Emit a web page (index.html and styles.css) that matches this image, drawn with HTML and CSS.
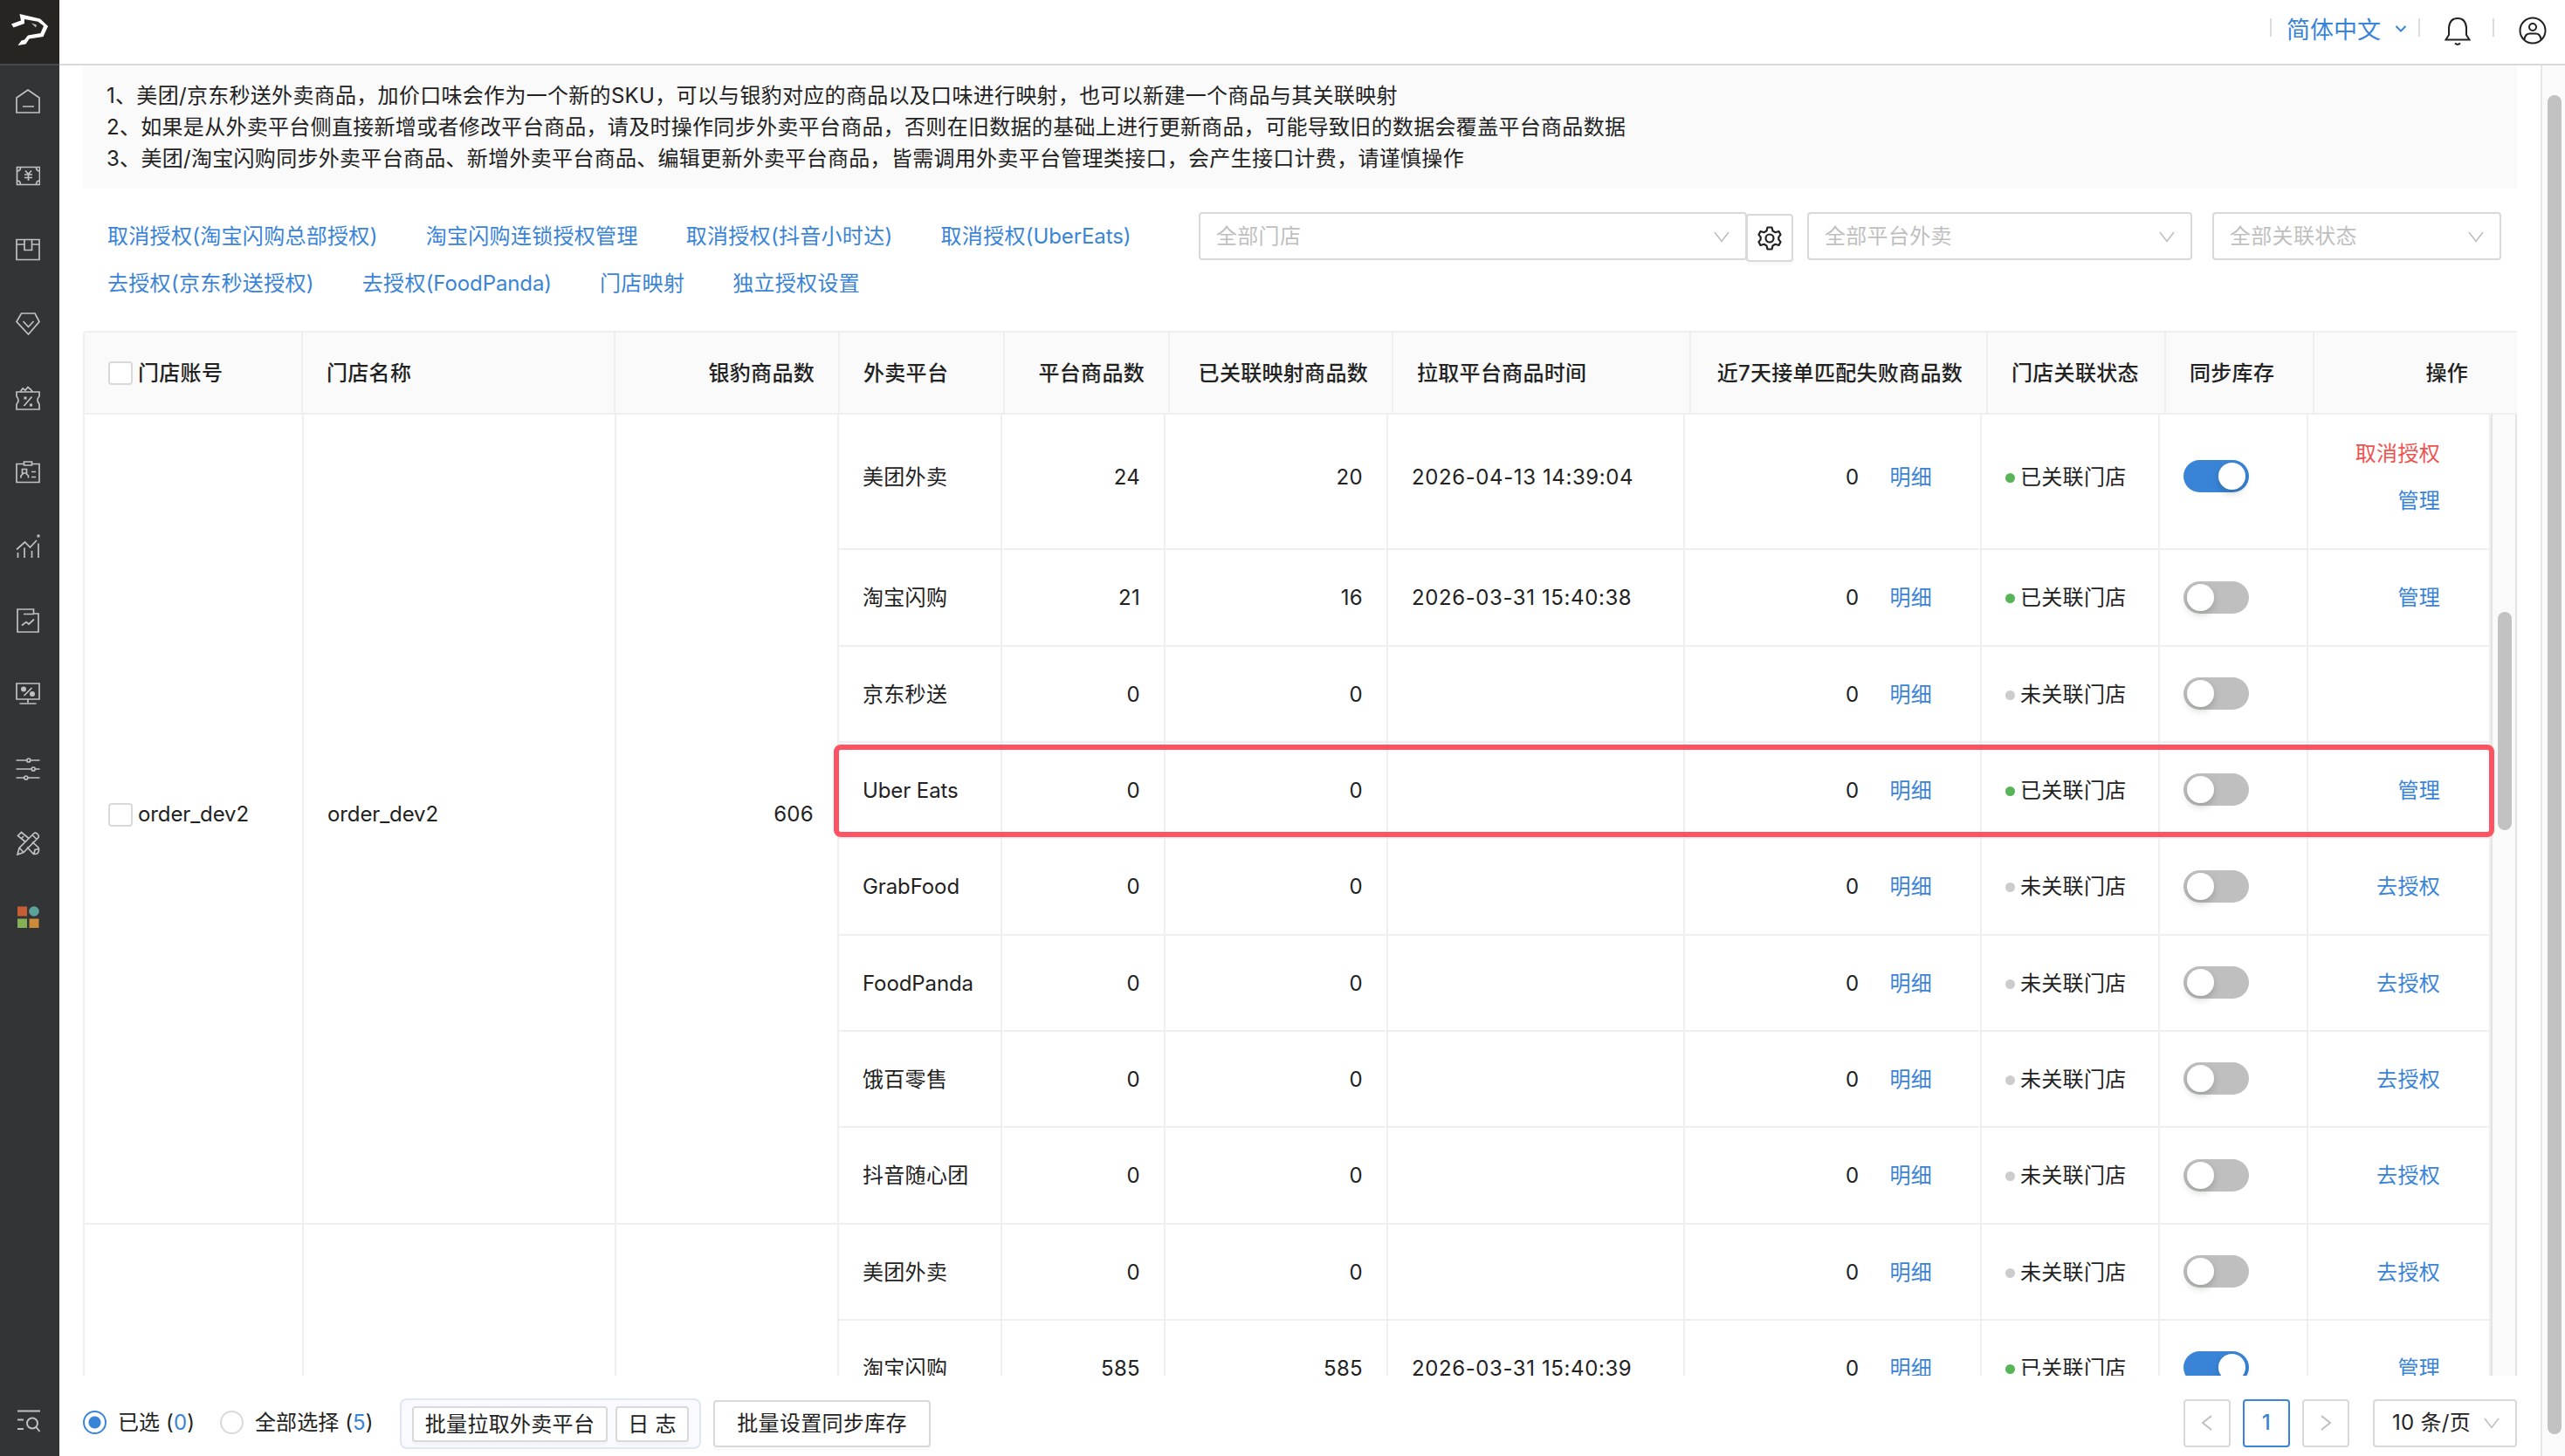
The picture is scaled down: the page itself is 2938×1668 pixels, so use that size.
FILE: index.html
```html
<!DOCTYPE html>
<html lang="zh-CN">
<head>
<meta charset="utf-8">
<title>外卖平台商品</title>
<link rel="stylesheet" href="styles.css">
</head>
<body>
<div class="app">
  <aside class="sidebar">
    <div class="logo"><svg width="44" height="36" viewBox="0 0 44 36"><path d="M1 11.500 12 7.500 10.500 0 34 5.500 43 14 37.500 26 21.500 28.500 17.500 34.500 8.500 36 12.500 30.500 16 29.500 20 24.500 34.500 22 38 13.800 31.500 8.800 16 6 16 11 3.500 15.500Z"/><path d="M24 10.500 30 12.500 29 15.500Z" opacity=".7"/></svg></div>
    <nav class="menu">
      <a><svg viewBox="0 0 28 28"><path d="M1 27V10L14 1l13 9v17ZM8 20h13"/></svg></a>
      <a><svg viewBox="0 0 28 28"><path d="M1.500 4.500h26v20h-26ZM1.500 9q4 0 4-4.500M27.500 9q-4 0-4-4.500M1.500 20q4 0 4 4.500M27.500 20q-4 0-4 4.500M11 8.500l3.500 4 3.500-4M14.500 12.500V20M10 13h9M10 16.500h9"/></svg></a>
      <a><svg viewBox="0 0 28 28"><path d="M1 2.500h26v23H1ZM1 8h9M18 8h9M10 2.500V14.500h8.500V2.500"/></svg></a>
      <a><svg viewBox="0 0 28 28"><path d="M6.500 2h15.500l5 9.500L14.500 26 1 11.500ZM8.500 11l6 6.500 6-6.500"/></svg></a>
      <a><svg viewBox="0 0 28 28"><path d="M1 7h26v5q-4 4 0 9v6H1v-6q4-4 0-9ZM9.500 23l9-10.500M5.500 6.500 8 3l3 2 3-3.500L17 4l2.500 3"/><path class="solid" d="M9.500 12.500h3v3h-3ZM16 20.500h3v3h-3Z"/></svg></a>
      <a><svg viewBox="0 0 28 28"><path d="M9 4.500H1v21h26v-21h-8M9.500 2h9v4h-9ZM6 20.500v-2.500l3-3M14.500 20.500v-2.500l-3-3M18 13.500h5M18 19.500h5M7.500 10.500h5v4.500h-5Z"/></svg></a>
      <a><svg viewBox="0 0 28 28"><path d="M1 17.500 10.500 9l6 6L24 7M2.500 27v-6M10 27V15.500M18.500 27v-8M26 27V10.500"/><path class="solid" d="M24.500.5h3v3h-3Z"/></svg></a>
      <a><svg viewBox="0 0 28 28"><path d="M2 1h18.500v5H26v21H2ZM9 6.500h12M7 19.500l5-4 3 2.500 6-5.500"/></svg></a>
      <a><svg viewBox="0 0 28 28"><path d="M1 1h26v18H1ZM14 19v4M4.500 24h19M9.500 15l9-9"/><circle class="solid" cx="9" cy="7.500" r="3"/><circle class="solid" cx="19" cy="13" r="3"/></svg></a>
      <a><svg viewBox="0 0 28 28"><path d="M.5 4H13M16.500 4h11M.5 14H18.500M22 14h5.500M.5 24H10M13.500 24h14"/><circle cx="14.800" cy="4" r="2"/><circle cx="20.200" cy="14" r="2"/><circle cx="11.800" cy="24" r="2"/></svg></a>
      <a><svg viewBox="0 0 28 28"><path d="M2 27l2-7.500L20.500 3q2-2 4.500.5t.5 4.500L9 24.500ZM4.500 19.500l4.500 5M19 4.500l5 5M10.500 12 2.500 5.500 6.500 1.500 15 8.500M6 9l3-3M19 12.500l7 6.500q1.500 4-1 6.500-3 2-5.500 0l-6.500-7M21 26l1-4.500 4.500-1"/></svg></a>
      <a><svg class="tiles" viewBox="0 0 28 28"><path fill="#c55d35" d="M2 1.500h11v11H2Z"/><circle fill="#5ba39a" cx="21" cy="7" r="5.800"/><path fill="#86b055" d="M2 15.500h11v10.500H2Z"/><path fill="#cc8b38" d="M15.500 15.500h11v10.500h-11Z"/></svg></a>
    </nav>
    <a class="menu-search"><svg width="28" height="28" viewBox="0 0 28 28"><path d="M1 2.500h26M1 12.500h7M1 23h7"/><circle cx="18" cy="16.500" r="6"/><path d="M22.500 21l4 5"/></svg></a>
  </aside>

  <div class="main">
    <header class="topbar">
      <a class="lang">简体中文<svg width="14" height="10" viewBox="0 0 14 10"><path d="M1.500 2 7 7.500 12.500 2"/></svg></a>
      <a class="bell"><svg width="30" height="34" viewBox="0 0 30 34"><path d="M1.500 26.500h27L25 21V12.500Q24 2 15 2T5 12.500V21ZM12 30.500q3 3 6 0"/></svg></a>
      <a class="user"><svg width="32" height="32" viewBox="0 0 32 32"><circle cx="16" cy="16" r="14.500"/><circle cx="16" cy="12" r="4"/><path d="M6.500 26q1-6.500 6-6.500h7q5 0 6 6.500"/></svg></a>
    </header>
    <div class="viewport">
      <div class="content">
        <div class="notice">
          <p>1、美团/京东秒送外卖商品，加价口味会作为一个新的SKU，可以与银豹对应的商品以及口味进行映射，也可以新建一个商品与其关联映射</p>
          <p>2、如果是从外卖平台侧直接新增或者修改平台商品，请及时操作同步外卖平台商品，否则在旧数据的基础上进行更新商品，可能导致旧的数据会覆盖平台商品数据</p>
          <p>3、美团/淘宝闪购同步外卖平台商品、新增外卖平台商品、编辑更新外卖平台商品，皆需调用外卖平台管理类接口，会产生接口计费，请谨慎操作</p>
        </div>
        <div class="toolbar">
          <div class="links">
            <a>取消授权(淘宝闪购总部授权)</a><a>淘宝闪购连锁授权管理</a><a>取消授权(抖音小时达)</a><a>取消授权<span class="latin">(UberEats)</span></a>
            <a>去授权(京东秒送授权)</a><a>去授权<span class="latin">(FoodPanda)</span></a><a>门店映射</a><a>独立授权设置</a>
          </div>
          <div class="select select-store">全部门店<svg class="chev" viewBox="0 0 18 13"><path d="M1 1l8 10.500L17 1"/></svg></div>
          <button class="gear"><svg width="28" height="28" viewBox="0 0 28 28"><path d="M11.500 1.500h5l1 4 3 1.700 4-1.200 2 3.800-2.200 2.900v2.600l2.200 2.900-2 3.800-4-1.200-3 1.700-1 4h-5l-1-4-3-1.700-4 1.200-2-3.800 2.200-2.900v-2.600L1.500 9.800l2-3.800 4 1.200 3-1.700Z"/><circle cx="14" cy="14" r="4.500"/></svg></button>
          <div class="select select-platform">全部平台外卖<svg class="chev" viewBox="0 0 18 13"><path d="M1 1l8 10.500L17 1"/></svg></div>
          <div class="select select-status">全部关联状态<svg class="chev" viewBox="0 0 18 13"><path d="M1 1l8 10.500L17 1"/></svg></div>
        </div>

        <div class="table">
          <table class="thead">
            <colgroup><col style="width:250px"><col style="width:358px"><col style="width:257px"><col style="width:189px"><col style="width:189px"><col style="width:256px"><col style="width:341px"><col style="width:340px"><col style="width:204px"><col style="width:170px"><col style="width:232px"></colgroup>
            <tr><th><div class="account"><i class="check"></i>门店账号</div></th><th>门店名称</th><th class="num">银豹商品数</th><th>外卖平台</th><th class="num">平台商品数</th><th class="num">已关联映射商品数</th><th>拉取平台商品时间</th><th class="num">近7天接单匹配失败商品数</th><th>门店关联状态</th><th>同步库存</th><th class="ops">操作</th></tr>
          </table>
          <div class="scroll">
            <table class="tbody">
              <colgroup><col style="width:251px"><col style="width:358px"><col style="width:255px"><col style="width:187px"><col style="width:187px"><col style="width:255px"><col style="width:340px"><col style="width:340px"><col style="width:204px"><col style="width:170px"><col style="width:209px"></colgroup>
              <tr class="tall"><td rowspan="8" class="latin"><div class="account"><i class="check"></i>order_dev2</div></td><td rowspan="8" class="latin">order_dev2</td><td rowspan="8" class="num">606</td><td>美团外卖</td><td class="num">24</td><td class="num">20</td><td class="date">2026-04-13 14:39:04</td><td class="fail">0<a>明细</a></td><td><span class="state on">已关联门店</span></td><td><i class="switch on"></i></td><td class="ops"><a class="danger">取消授权</a><a>管理</a></td></tr>
              <tr class="r111"><td>淘宝闪购</td><td class="num">21</td><td class="num">16</td><td class="date">2026-03-31 15:40:38</td><td class="fail">0<a>明细</a></td><td><span class="state on">已关联门店</span></td><td><i class="switch"></i></td><td class="ops"><a>管理</a></td></tr>
              <tr><td>京东秒送</td><td class="num">0</td><td class="num">0</td><td></td><td class="fail">0<a>明细</a></td><td><span class="state">未关联门店</span></td><td><i class="switch"></i></td><td></td></tr>
              <tr><td class="latin">Uber Eats</td><td class="num">0</td><td class="num">0</td><td></td><td class="fail">0<a>明细</a></td><td><span class="state on">已关联门店</span></td><td><i class="switch"></i></td><td class="ops"><a>管理</a></td></tr>
              <tr class="r111"><td class="latin">GrabFood</td><td class="num">0</td><td class="num">0</td><td></td><td class="fail">0<a>明细</a></td><td><span class="state">未关联门店</span></td><td><i class="switch"></i></td><td class="ops"><a>去授权</a></td></tr>
              <tr><td class="latin">FoodPanda</td><td class="num">0</td><td class="num">0</td><td></td><td class="fail">0<a>明细</a></td><td><span class="state">未关联门店</span></td><td><i class="switch"></i></td><td class="ops"><a>去授权</a></td></tr>
              <tr><td>饿百零售</td><td class="num">0</td><td class="num">0</td><td></td><td class="fail">0<a>明细</a></td><td><span class="state">未关联门店</span></td><td><i class="switch"></i></td><td class="ops"><a>去授权</a></td></tr>
              <tr class="r111"><td>抖音随心团</td><td class="num">0</td><td class="num">0</td><td></td><td class="fail">0<a>明细</a></td><td><span class="state">未关联门店</span></td><td><i class="switch"></i></td><td class="ops"><a>去授权</a></td></tr>
              <tr><td rowspan="2"></td><td rowspan="2"></td><td rowspan="2"></td><td>美团外卖</td><td class="num">0</td><td class="num">0</td><td></td><td class="fail">0<a>明细</a></td><td><span class="state">未关联门店</span></td><td><i class="switch"></i></td><td class="ops"><a>去授权</a></td></tr>
              <tr><td>淘宝闪购</td><td class="num">585</td><td class="num">585</td><td class="date">2026-03-31 15:40:39</td><td class="fail">0<a>明细</a></td><td><span class="state on">已关联门店</span></td><td><i class="switch on"></i></td><td class="ops"><a>管理</a></td></tr>
            </table>
            <div class="track"><div class="thumb"></div></div>
          </div>
          <div class="highlight"></div>
        </div>

        <footer class="footer">
          <span class="radio checked"></span><span class="radio-label first">已选 (<b>0</b>)</span>
          <span class="radio"></span><span class="radio-label second">全部选择 (<b>5</b>)</span>
          <div class="group"><button class="btn pull">批量拉取外卖平台</button><button class="btn log">日 志</button></div>
          <button class="btn stock">批量设置同步库存</button>
          <div class="pager">
            <span class="page"><svg width="12" height="18" viewBox="0 0 12 18"><path d="M11 1 1 9l10 8"/></svg></span>
            <span class="page active">1</span>
            <span class="page"><svg width="12" height="18" viewBox="0 0 12 18"><path d="M1 1l10 8L1 17"/></svg></span>
            <span class="page-size">10 条/页<svg class="chev" viewBox="0 0 18 13"><path d="M1 1l8 10.500L17 1"/></svg></span>
          </div>
        </footer>
      </div>
      <div class="page-track"><div class="thumb"></div></div>
    </div>
  </div>
</div>
</body>
</html>
```
FILE: styles.css
```css
* { box-sizing: border-box; }
body {
  margin: 0;
  background: #fff;
  color: #222;
  font: 24px/36px Inter, "Noto Sans CJK SC", sans-serif;
  letter-spacing: .3px;
}
a { color: #3a84d8; text-decoration: none; }
p { margin: 0; }
svg { display: block; fill: none; stroke: currentColor; stroke-width: 2; flex: none; }
button { font: inherit; letter-spacing: inherit; color: inherit; padding: 0; }
.latin { letter-spacing: -.1px; }

.app { display: flex; height: 1668px; overflow: hidden; }

/* Sidebar */
.sidebar { width: 68px; background: #333436; display: flex; flex-direction: column; }
.logo { height: 75px; background: #262522; border-bottom: 2px solid #46484a; padding: 16px 0 0 12px; }
.logo svg { fill: #fff; stroke: none; }
.menu a { height: 85px; padding: 0 4px 3px 0; display: flex; align-items: center; justify-content: center; color: #bfc1c2; }
.menu svg { width: 28px; height: 28px; stroke-width: 1.7; }
.menu .solid { fill: currentColor; stroke: none; }
.menu .tiles { stroke: none; }
.menu-search { margin: auto 0 26px 19px; color: #bfc1c2; }

/* Top bar */
.main { flex: 1; min-width: 0; display: flex; flex-direction: column; }
.topbar { height: 75px; border-bottom: 2px solid #d9d9d9; display: flex; justify-content: flex-end; padding: 20px 21px 0 0; }
.topbar a { position: relative; }
.topbar a::before { content: ""; position: absolute; left: 0; top: 1px; width: 2px; height: 21px; background: #dcdcdc; }
.lang { width: 170px; display: flex; align-items: center; gap: 16px; padding: 2px 0 0 19px; height: 28px; font-size: 27px; letter-spacing: 0; }
.lang svg { margin-top: -4px; }
.bell { width: 85px; padding-left: 30px; }
.bell svg { margin-top: -1px; }
.user { width: 62px; padding-left: 30px; }
.user svg { margin-top: -1px; }
.topbar .bell, .topbar .user { color: #222; }

/* Content */
.viewport { flex: 1; min-height: 0; display: flex; }
.content { flex: 1; padding: 0 27px; display: flex; flex-direction: column; }
.notice { height: 141px; background: #fafafa; padding: 17px 0 0 27px; white-space: nowrap; }
.toolbar { height: 163px; padding: 27px 18px 0 28px; display: flex; align-items: flex-start; }
.links { width: 1250px; display: flex; flex-wrap: wrap; column-gap: 55px; line-height: 54px; padding-top: 1px; }
.select { height: 55px; border: 2px solid #d9d9d9; border-radius: 4px; padding: 1px 18px 0 18px; display: flex; align-items: center; justify-content: space-between; color: #bfbfbf; }
.chev { width: 18px; height: 13px; stroke-width: 1.6; color: #bfbfbf; }
.select-store { width: 628px; }
.gear { width: 54px; height: 55px; margin: 2px 16px 0 -1px; background: #fff; border: 2px solid #d9d9d9; border-radius: 4px; display: flex; align-items: center; justify-content: center; box-shadow: 0 4px 0 rgba(0, 0, 0, .02); }
.gear svg { stroke-width: 2.2; stroke-linejoin: round; }
.select-platform { width: 441px; margin-right: 23px; }
.select-status { width: 331px; }

/* Table */
.table { position: relative; height: 1197px; border: 2px solid #efefef; border-width: 2px 0 0 2px; border-radius: 4px 0 0 0; }
table { table-layout: fixed; border-collapse: separate; border-spacing: 0; }
th, td { padding: 1px 27px 0; border: 0 solid #efefef; border-width: 0 2px 2px 0; text-align: left; white-space: nowrap; }
.thead { width: 2786px; background: #fafafa; }
th { height: 94px; font-weight: 500; }
th:last-child { border-right: 0; }
.scroll { height: 1101px; overflow: hidden; display: flex; }
.tbody { width: 2756px; margin-top: -11px; flex: none; align-self: flex-start; }
td { height: 110px; }
.r111 td { height: 111px; }
.tall td { height: 166px; }
.num { text-align: right; }
.date { letter-spacing: .6px; }
.account { display: flex; align-items: center; gap: 6px; }
.check { width: 28px; height: 27px; border: 2px solid #d9d9d9; border-radius: 4px; background: #fff; }
.fail { text-align: right; padding-right: 55px; }
.fail a { margin-left: 35px; }
.ops { text-align: right; padding-right: 56px; }
.ops a { display: block; line-height: 54px; }
.ops .danger { color: #ee5350; }
.state { display: flex; align-items: center; gap: 6px; }
.state::before { content: ""; width: 11px; height: 11px; border-radius: 50%; background: #ccc; margin-top: 1px; }
.state.on::before { background: #57b557; }
.switch { display: block; width: 75px; height: 37px; margin-top: -2px; border-radius: 19px; background: #bfbfbf; padding: 3px 4px; }
.switch::before { content: ""; display: block; width: 31px; height: 31px; border-radius: 50%; background: #fff; box-shadow: 0 4px 8px rgba(0, 35, 11, .2); }
.switch.on { background: #3a84d8; }
.switch.on::before { margin-left: auto; }
.track { flex: 1; background: #fafafa; border: 2px solid #e4e4e4; border-width: 0 2px; padding: 226px 0 0 6px; }
.thumb { width: 16px; border-radius: 8px; background: #c2c2c2; }
.track .thumb { height: 250px; }
.highlight { position: absolute; left: 858px; top: 472px; width: 1902px; height: 106px; border: 6px solid #ff5262; border-radius: 8px; }
.page-track { width: 28px; background: #fafafa; border-left: 2px solid #e6e6e6; padding: 34px 0 0 6px; }
.page-track .thumb { height: 1534px; }

/* Footer */
.footer { height: 92px; display: flex; align-items: center; padding-top: 18px; }
.radio { width: 27px; height: 27px; border: 2px solid #d9d9d9; border-radius: 50%; margin-top: -4px; }
.radio.checked { border-color: #3a84d8; background: radial-gradient(circle, #3a84d8 6.5px, transparent 7.5px); }
.radio-label { padding-left: 13px; margin-top: -3px; white-space: nowrap; letter-spacing: .1px; }
.radio-label b { font-weight: 400; color: #3a84d8; }
.first { width: 130px; }
.second { width: 179px; }
.group { width: 345px; height: 58px; border: 2px solid #dfe6f4; border-radius: 8px; background: #f8faff; display: flex; align-items: center; gap: 9px; padding-left: 12px; margin-right: 14px; }
.btn { height: 54px; border: 2px solid #d9d9d9; border-radius: 4px; background: #fff; box-shadow: 0 4px 0 rgba(0, 0, 0, .02); white-space: nowrap; }
.group .btn { height: 41px; line-height: 37px; }
.pull { width: 224px; }
.log { width: 84px; }
.stock { width: 249px; }
.pager { margin-left: auto; display: flex; margin-top: -2px; }
.page { width: 54px; height: 55px; border: 2px solid #d9d9d9; border-radius: 4px; margin-right: 14px; display: flex; align-items: center; justify-content: center; color: #bfbfbf; }
.page.active { border-color: #3a84d8; color: #3a84d8; font-weight: 500; }
.page-size { width: 165px; height: 55px; border: 2px solid #d9d9d9; border-radius: 4px; margin-left: 13px; padding: 0 18px 0 20px; display: flex; align-items: center; justify-content: space-between; white-space: nowrap; }
```
